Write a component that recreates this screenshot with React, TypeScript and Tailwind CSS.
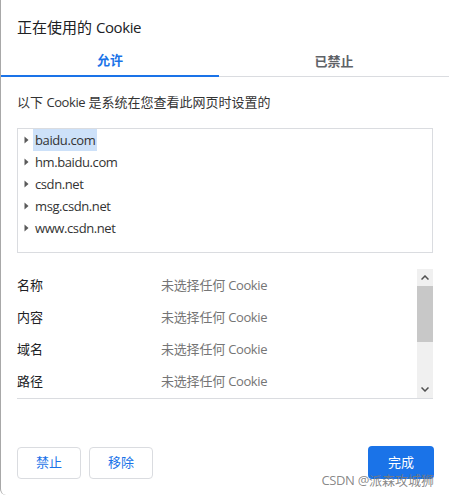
import React from "react";

const FONT = "font-['Segoe_UI','Open_Sans','Noto_Sans_CJK_SC',sans-serif]";

const domains = ["baidu.com", "hm.baidu.com", "csdn.net", "msg.csdn.net", "www.csdn.net"];
const rows = ["名称", "内容", "域名", "路径"];

function T({ s }: { s: string }) {
  const parts = s.split(/([A-Za-z0-9.@]+)/);
  return (
    <>
      {parts.map((p, i) =>
        /^[A-Za-z0-9.@]+$/.test(p) ? (
          <span key={i} className="tracking-[-0.4px]">
            {p}
          </span>
        ) : (
          <React.Fragment key={i}>{p}</React.Fragment>
        )
      )}
    </>
  );
}

function Tri() {
  return (
    <svg width="5" height="8" viewBox="0 0 5 8" className="shrink-0">
      <path d="M0.5 0.5 L4.5 4 L0.5 7.5 Z" fill="#5a5a5a" />
    </svg>
  );
}

export default function App() {
  return (
    <div className={`relative w-[449px] h-[495px] bg-white border-l border-[#a8a8a8] rounded-bl-[6px] overflow-hidden flex flex-col ${FONT}`}>
      <div className="pl-4 pt-[17px] text-[15px] leading-[20px] text-[#202124]">
        <T s="正在使用的 Cookie" />
      </div>

      <div className="mt-[10px] flex border-b border-[#dadce0] h-[30px]">
        <div className="w-[218px] -mb-px border-b-2 border-[#1a73e8] flex items-center justify-center text-[13px] font-semibold text-[#1a73e8]">
          允许
        </div>
        <div className="flex-1 flex items-center justify-center text-[13px] font-semibold text-[#5f6368]">
          已禁止
        </div>
      </div>

      <div className="pl-4 mt-[15px] text-[13px] leading-[20px] text-[#333]">
        <T s="以下 Cookie 是系统在您查看此网页时设置的" />
      </div>

      <div className="mx-4 mt-[16px] h-[125px] border border-[#dadce0] flex flex-col">
        {domains.map((d, i) => (
          <div key={d} className="h-[22px] flex items-center pl-[6px]">
            <Tri />
            <span
              className={`ml-[4px] px-[2px] pt-[2px] h-[22px] flex items-center text-[13px] text-[#333] tracking-[-0.4px] ${i === 0 ? "bg-[#cde1f9]" : ""}`}
            >
              {d}
            </span>
          </div>
        ))}
      </div>

      <div className="mx-4 mt-[16px] h-[130px] border-b border-[#dadce0] flex">
        <div className="flex-1 pt-px flex flex-col">
          {rows.map((r) => (
            <div key={r} className="h-[32px] flex items-center text-[13px]">
              <span className="w-[144px] text-[#202124]">{r}</span>
              <span className="text-[#757575] tracking-[-0.2px]">
                <T s="未选择任何 Cookie" />
              </span>
            </div>
          ))}
        </div>
        <div className="w-[16px] bg-[#f0f0f0] flex flex-col">
          <div className="h-[17px] flex items-center justify-center">
            <svg width="8" height="5" viewBox="0 0 8 5">
              <path d="M0.5 4.5 L4 1 L7.5 4.5" fill="none" stroke="#505050" strokeWidth="1.5" />
            </svg>
          </div>
          <div className="h-[56px] bg-[#c8c8c8]" />
          <div className="flex-1" />
          <div className="h-[17px] flex items-center justify-center">
            <svg width="8" height="5" viewBox="0 0 8 5">
              <path d="M0.5 0.5 L4 4 L7.5 0.5" fill="none" stroke="#505050" strokeWidth="1.5" />
            </svg>
          </div>
        </div>
      </div>

      <div className="flex-1" />

      <div className="pl-4 pr-[15px] pb-[16px] flex items-end">
        <button className="w-[64px] h-[32px] rounded-[4px] border border-[#dadce0] bg-white text-[13px] text-[#1a73e8]">禁止</button>
        <button className="ml-2 w-[64px] h-[32px] rounded-[4px] border border-[#dadce0] bg-white text-[13px] text-[#1a73e8]">移除</button>
        <div className="flex-1" />
        <button className="w-[66px] h-[33px] rounded-[4px] bg-[#1a73e8] text-[13px] text-white">完成</button>
      </div>

      <div className="absolute right-[15px] top-[471px] text-[13px] leading-[18px] text-[#7a7a7a]/90">
        <T s="CSDN @派森攻城狮" />
      </div>
    </div>
  );
}
